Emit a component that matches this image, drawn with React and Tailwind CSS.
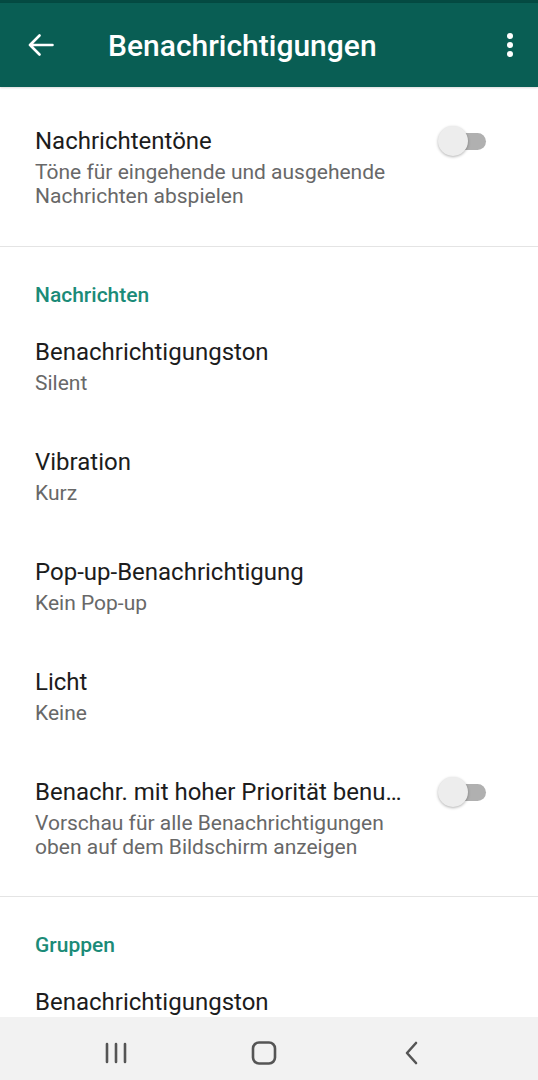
import React from "react";

function Toggle() {
  return (
    <div className="relative w-[52px] h-[32px] shrink-0">
      <div className="absolute left-[14px] top-[8px] w-[36px] h-[17px] rounded-full bg-[#b0b0b0]" />
      <div className="absolute left-[2px] top-[1px] w-[30px] h-[30px] rounded-full bg-[#ededed] shadow-[0_1px_3px_rgba(0,0,0,0.3)]" />
    </div>
  );
}

function Item({ title, sub, toggle, first }) {
  return (
    <div className={`flex items-start justify-between pr-[50px] ${first ? "" : "mt-[52px]"}`}>
      <div>
        <div className="text-[24px] leading-[30px] text-[#1c1c1c]">{title}</div>
        <div className="mt-[4px] text-[21px] leading-[24px] text-[#686868]">{sub}</div>
      </div>
      {toggle && (
        <div className="mt-[-1px]">
          <Toggle />
        </div>
      )}
    </div>
  );
}

function Section({ children }) {
  return (
    <div className="text-[21px] leading-[24px] font-medium text-[#1b8b78]">{children}</div>
  );
}

export default function App() {
  return (
    <div
      className="w-[538px] h-[1080px] flex flex-col bg-white overflow-hidden"
      style={{ fontFamily: "Roboto, 'Noto Sans', sans-serif" }}
    >
      <div className="h-[3px] bg-[#044a42] shrink-0" />
      <div className="h-[84px] shrink-0 bg-[#095e54] flex items-center pl-[28px] pr-[24px] shadow-[0_1px_2px_rgba(0,0,0,0.15)] relative z-10">
        <svg width="26" height="22" viewBox="0 0 26 22" fill="none" stroke="white" strokeWidth="2.6" strokeLinecap="round" strokeLinejoin="round">
          <path d="M24.5 11H2M11.5 1.5L2 11l9.5 9.5" />
        </svg>
        <div className="ml-[54px] text-[30px] font-medium text-white">Benachrichtigungen</div>
        <div className="ml-auto">
          <svg width="8" height="26" viewBox="0 0 8 26" fill="white">
            <circle cx="4" cy="4" r="3" />
            <circle cx="4" cy="13" r="3" />
            <circle cx="4" cy="22" r="3" />
          </svg>
        </div>
      </div>
      <div className="flex-1 overflow-hidden">
        <div className="pl-[35px] pt-[39px] pb-[38px]">
          <Item
            first
            toggle
            title="Nachrichtentöne"
            sub={<>Töne für eingehende und ausgehende<br />Nachrichten abspielen</>}
          />
        </div>
        <div className="h-[1px] bg-[#e4e4e4]" />
        <div className="pl-[35px] pt-[36px] pb-[37px]">
          <Section>Nachrichten</Section>
          <div className="mt-[30px]">
            <Item first title="Benachrichtigungston" sub="Silent" />
            <Item title="Vibration" sub="Kurz" />
            <Item title="Pop-up-Benachrichtigung" sub="Kein Pop-up" />
            <Item title="Licht" sub="Keine" />
            <Item
              toggle
              title="Benachr. mit hoher Priorität benu…"
              sub={<>Vorschau für alle Benachrichtigungen<br />oben auf dem Bildschirm anzeigen</>}
            />
          </div>
        </div>
        <div className="h-[1px] bg-[#e4e4e4]" />
        <div className="pl-[35px] pt-[36px]">
          <Section>Gruppen</Section>
          <div className="mt-[30px] text-[24px] leading-[30px] text-[#1c1c1c]">Benachrichtigungston</div>
        </div>
      </div>
      <div className="h-[63px] shrink-0 bg-[#f2f2f2] flex items-center pl-[92px] pt-[8px] gap-[100px]">
        <div className="w-[48px] flex justify-center">
          <svg width="24" height="22" viewBox="0 0 24 22" fill="none" stroke="#555" strokeWidth="2.6" strokeLinecap="round">
            <path d="M3 2v18M12 2v18M21 2v18" />
          </svg>
        </div>
        <div className="w-[48px] flex justify-center">
          <svg width="26" height="24" viewBox="0 0 26 24" fill="none" stroke="#555" strokeWidth="2.6">
            <rect x="2" y="1.5" width="22" height="21" rx="6" />
          </svg>
        </div>
        <div className="w-[48px] flex justify-center">
          <svg width="16" height="24" viewBox="0 0 16 24" fill="none" stroke="#555" strokeWidth="2.6" strokeLinecap="round" strokeLinejoin="round">
            <path d="M12 2L3 12l9 10" />
          </svg>
        </div>
      </div>
    </div>
  );
}
